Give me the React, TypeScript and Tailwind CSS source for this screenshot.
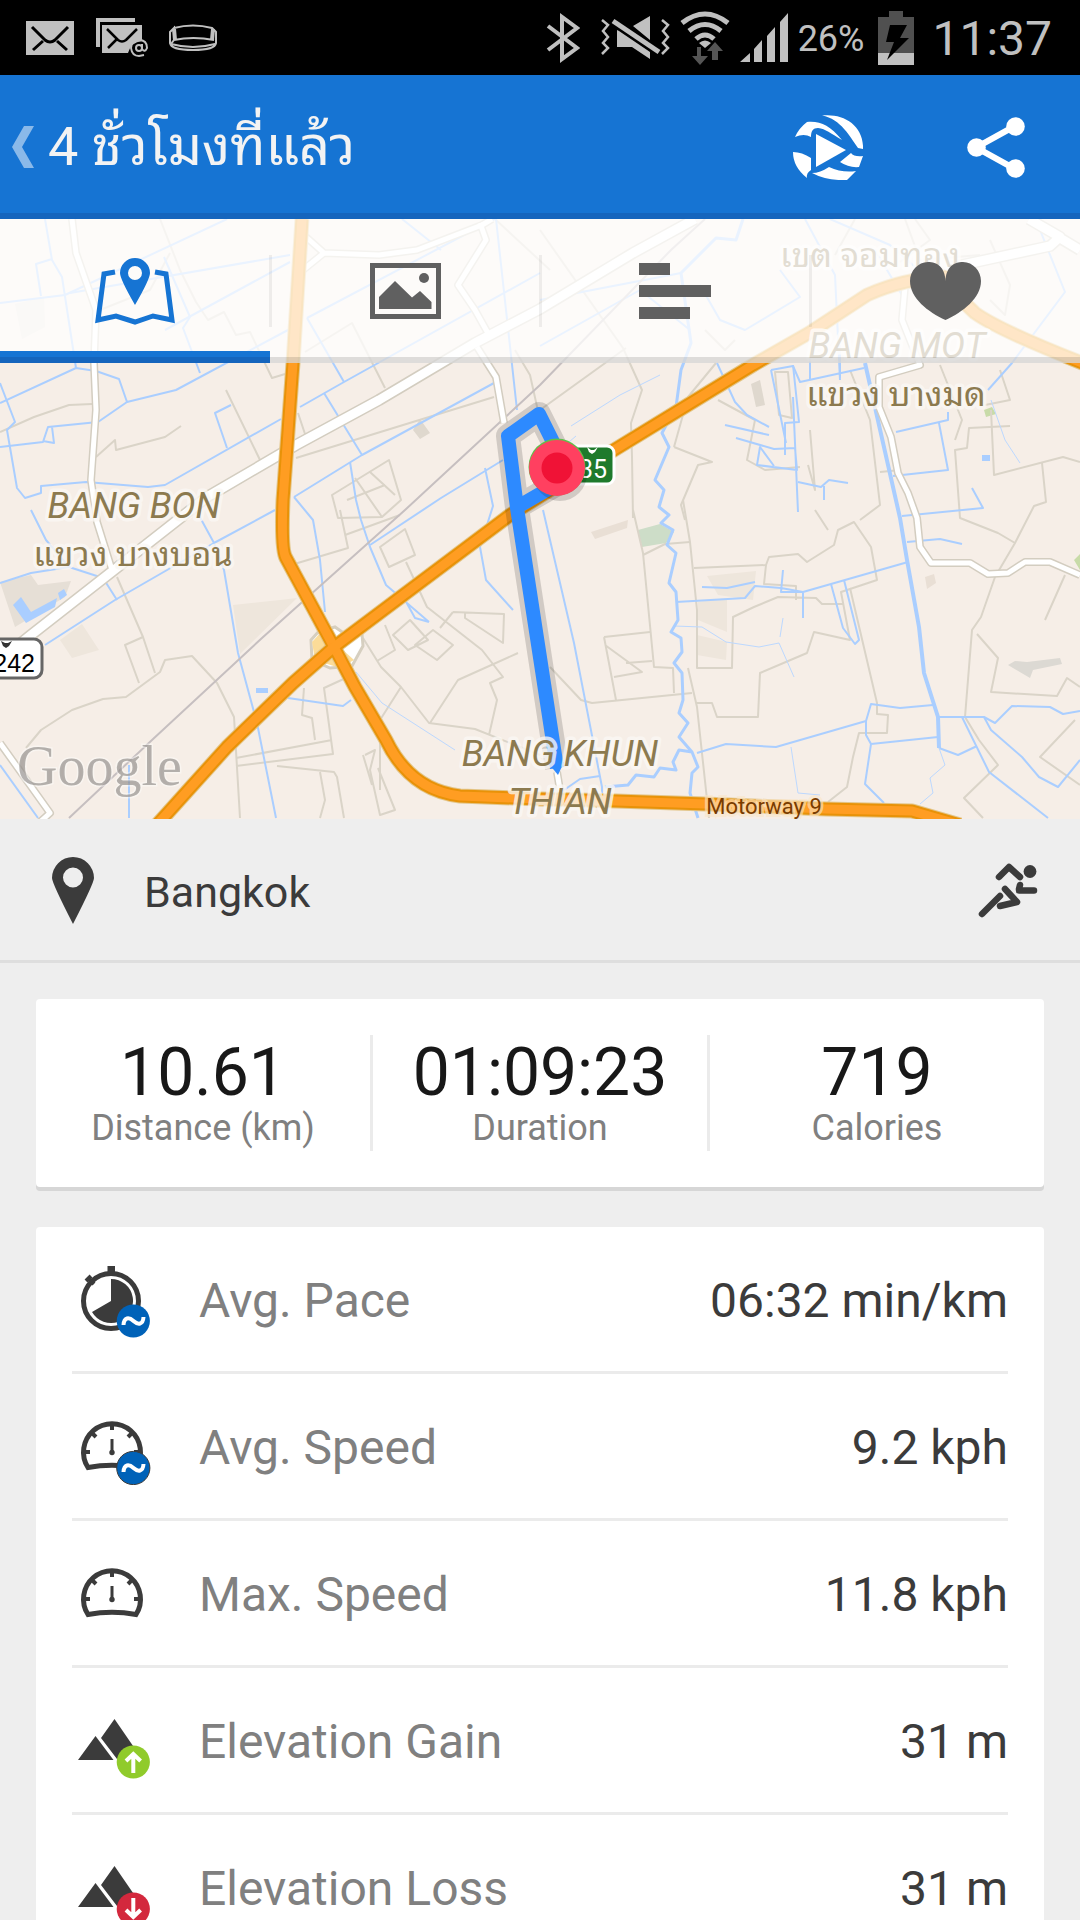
import type { ReactNode } from 'react';

const DARK = '#3b3b3b';

const tabs = [
    { key: 'map', label: 'Map', icon: <MapTabIcon /> },
    { key: 'photos', label: 'Photos', icon: <PhotoTabIcon /> },
    { key: 'splits', label: 'Splits', icon: <SplitsTabIcon /> },
    { key: 'heart', label: 'Heart rate', icon: <HeartTabIcon /> },
];

const summary = [
    { label: 'Distance (km)', value: '10.61' },
    { label: 'Duration', value: '01:09:23' },
    { label: 'Calories', value: '719' },
];

const details = [
    { label: 'Avg. Pace', value: '06:32 min/km', icon: <PaceIcon /> },
    { label: 'Avg. Speed', value: '9.2 kph', icon: <GaugeIcon average /> },
    { label: 'Max. Speed', value: '11.8 kph', icon: <GaugeIcon /> },
    { label: 'Elevation Gain', value: '31 m', icon: <ElevationIcon direction="up" /> },
    { label: 'Elevation Loss', value: '31 m', icon: <ElevationIcon direction="down" /> },
];

/* Map geometry */
const canals = [
    'M0 403 76 368 96 371 119 379 127 402 176 390 288 330',
    'M127 402 98 422 48 427 43 442 0 447M52 427 54 443 43 441',
    'M0 383 15 422 7 430 17 488 25 498 41 493V486L86 482 148 487 165 485 281 419',
    'M45 219 52 260 62 277 76 368M227 219 65 295 0 303M52 259 36 264 41 296',
    'M164 257 190 317 183 328 200 373M300 407 344 382 540 273M307 318 344 382',
    'M70 293 290 255M165 330 290 262M307 318 540 195M324 393 362 455',
    'M294 497 362 455 494 383M294 497 313 520 320 560 325 612',
    'M350 462 356 500 361 520 370 547 386 585 429 622M404 598 415 618 429 622',
    'M370 545 441 498 503 460M485 468 493 506 480 547 486 580 513 610',
    'M496 219 517 410M231 405 215 413 227 448M441 250 402 219',
    'M196 510 214 543 275 510M214 543 115 600 45 645M214 543 224 570 238 653 257 723 276 818',
    'M31 510 46 540 69 567 103 578 117 600M0 583 31 573 69 567',
    'M288 698 343 706 351 700M0 765 38 818M129 765V818',
    'M717 363 735 402 747 415 769 427M771 370 786 443M793 365 799 422 785 423V455',
    'M771 370 793 366 800 382 864 368M736 438 774 449 795 448 797 470 757 465 760 447 774 466M725 425 769 435M793 397 798 512M840 345V378M810 355V380',
    'M798 482 821 487 829 480 848 483M824 486V500M896 432 948 420V412M893 476 948 470 939 423',
    'M902 516 983 508 972 488M988 390 1012 363 1065 292 1040 230M907 542 940 539 962 544',
    'M676 602 745 598 755 586 781 588 803 592 908 562M702 587 727 588 755 582M783 570 781 592 803 592V618',
    'M831 584 843 628 855 644 859 640 844 580',
    'M697 753 726 744 776 747 866 721 871 704 900 708 933 705',
    'M866 721V735L871 744 938 737M871 744 865 784 884 803',
    'M938 717H984L995 723 1012 706 1050 707 1063 714 1080 711',
    'M984 717 991 730 1022 757 1039 777 1058 787 1080 760',
    'M962 717 989 772 1048 818M939 748 958 755 977 746',
    'M543 510 574 643 602 787V805M564 790 580 779 600 776',
    'M540 346 640 290 690 330M540 300 681 273M805 219 835 275 840 380M700 285 720 320 745 330 800 297 780 270',
    'M830 219 890 245 930 280 960 270M875 250 905 300',
];

const streams = [
    'M356 672 382 703 455 750M783 618 780 637M939 748 945 765 930 778 933 793 920 804',
    'M674 626 702 627 726 642 759 647 779 643 794 677M791 747 798 793 820 795',
    'M991 400 1005 440 1020 463M571 426 620 395 660 375M562 448 576 436',
];

const river =
    'M743 219 736 240 716 238 681 273 691 343 681 370 676 407 662 433 669 447 655 480 664 490 659 507 669 515 661 523 673 530 667 545 676 553 669 583 676 592 678 620 671 632 681 638 682 652 674 663 682 673 683 700 679 713 688 723 679 737 692 752 698 767 692 773 690 793 698 818M692 752 679 750 673 762 676 770 660 768 654 777 636 775 628 785 605 787';

const lanes = [
    'M643 555 665 544 690 542M633 510 643 553 654 667 673 668 674 693',
    'M694 568 766 565 769 557 798 554 807 562 834 545 838 530 854 522 871 547 877 580 841 592 850 640 814 632 807 653 760 673 758 717 717 717 712 703 696 703',
    'M766 565 764 584 796 586V600M683 500 690 542 697 610V668H732L733 617 754 607 778 597 816 598 822 604 843 604',
    'M688 668 697 707 709 818M850 588 877 703V714L888 715 887 733 859 733 853 757 847 787 828 802',
    'M550 667 581 700 592 703 692 693M604 637 650 632M604 637 616 700M605 645 642 672 614 677M626 663 652 661',
    'M1010 426 969 428 967 448 955 450 960 518 998 533 1015 543 995 577 981 617 972 630 965 717 979 740 998 765 964 798 983 818',
    'M977 634 998 658 991 692 1057 696 1067 678 1080 687M991 410 994 475 1063 457 1080 462M1042 463 1046 502 1034 506 1015 543',
    'M633 518 632 457 631 423 642 390 623 348 540 230M540 410 626 348M674 447 688 397 716 363M674 447 712 462 698 465 681 505 685 520',
    'M26 748 41 730 72 710 103 699 126 697 160 672 165 660 192 656 217 683 234 717 240 818',
    'M117 577 143 637 155 673M143 637 125 645 139 683M236 758 332 740M236 766 333 754 324 688 348 677',
    'M304 688 302 715 312 718 315 740M277 766 334 772 337 777 344 818M320 772 325 800 320 818',
    'M363 638 381 667 401 687 429 723 475 729 540 755M430 723 458 680 518 653M401 687 380 720 380 790',
    'M406 562 427 607 482 650 503 677 490 683 497 700 489 735M453 612 504 614 503 643 465 618V612M453 612 440 628',
    'M380 547 405 529 415 555 389 567ZM393 635 410 620 428 640 408 650ZM415 645 433 630 453 645 437 660Z',
    'M365 755 375 750 370 770 380 815 395 810 378 768M363 755 372 785M377 661 395 650 385 625',
    'M226 390 260 460M96 457 115 440 116 450 165 437 181 426M0 432 34 417 69 405 92 404M298 413 307 440',
    'M160 219 180 270 196 302 208 320 224 312 236 335 250 332 272 378 285 374M100 310 150 290 170 253',
    'M332 495 389 460 401 500 382 517 338 518ZM355 478 382 517M370 472 395 495M345 535 400 515M347 500 385 485',
    'M305 352 352 323 385 388M296 458 494 397M515 350 530 375 540 420M291 565 348 548 340 510M495 219 550 270',
    'M718 400 755 420 747 460 765 470 800 467M775 372 779 415 792 418 788 372ZM810 430 815 490 808 465',
    'M850 370 870 420 880 505 860 520M815 510 828 530M905 219 920 260 980 255M855 219 835 255M940 365 962 420 955 440M1000 370 1010 400 985 405M990 300 1005 315 1010 285 990 240',
    'M880 472 900 470M915 219 930 240 900 262M705 330 725 350 735 340M1065 575 1045 620M1075 720 1040 757 1080 785',
];

const whiteRoads = [
    'M72 219 76 253 96 310 94 363 96 410 91 480 97 522 112 570',
    'M306 237 324 253 303 270M324 253 379 255 417 250 482 225 492 219',
    'M480 223 486 240 458 285 475 310 489 335M477 347 496 377 504 423',
    'M905 287 902 320 920 365 879 377V407L891 437 898 473 908 493 917 518 920 547 931 563H970L988 574 1008 573 1025 562 1050 562 1080 575',
    'M0 743 50 813 40 822M557 772 561 796',
];

const wideWhiteRoads = [
    'M695 219 633 253 540 309 475 343 379 400 296 445 207 497 114 570 31 635 0 660',
    'M1029 219 1060 237 1050 246 953 267M1055 235 1080 250',
];

const highways = [
    'M302 219 293 363 283 500Q281 550 286 558L334 647 355 687 386 740Q410 790 460 796L540 799 616 801 705 804 826 809 912 811 960 825',
    'M155 827 227 747 293 683 334 647 510 515 614 450 753 365 809 333 867 295Q905 278 946 277 960 300 975 313 1000 331 1090 366',
];

function StatusBar() {
    return (
        <div className="flex h-[75px] shrink-0 items-center justify-between bg-black px-6 text-[#c0c0c0]">
            <div className="flex items-center gap-5">
                <svg viewBox="0 0 50 36" className="h-9 w-[50px]" fill="none">
                    <path fill="#c0c0c0" d="M2 1h48v34H2z" />
                    <path d="M8 7 21 20q5 4 10 0L44 7M9 30l10-9M43 30 33 21" stroke="#000" strokeWidth="3" />
                </svg>
                <svg viewBox="0 0 54 40" className="h-10 w-[54px]" fill="none">
                    <path d="M4 29V2H41" stroke="#c0c0c0" strokeWidth="4" />
                    <path fill="#c0c0c0" d="M8 7h40v16q-11 1-14 12H8z" />
                    <path d="M13 11 24 22q4 3 8 0L43 11M14 30l9-9" stroke="#000" strokeWidth="2.500" />
                    <circle cx="45" cy="30" r="3" stroke="#c0c0c0" strokeWidth="2" />
                    <path d="M48 26v5q3 4 5-1 0-8-8-8-8 1-8 8 1 8 8 8l5-1" stroke="#c0c0c0" strokeWidth="2" />
                </svg>
                <svg viewBox="0 0 50 28" className="h-7 w-[50px]" fill="none" stroke="#c0c0c0" strokeWidth="2">
                    <path d="M6 4Q25-1 44 4L48 8V19Q47 26 25 26T2 19V8L6 4V16Q25 12 46 16M44 4V15M6 16 3 20Q25 26 47 20" />
                    <path d="M6 5 7 16M45 5 44 16" strokeWidth="4" />
                </svg>
            </div>
            <div className="flex items-center gap-2.5">
                <svg viewBox="0 0 34 52" className="mr-2.5 h-[52px] w-[34px]" fill="none" stroke="#c0c0c0" strokeWidth="4">
                    <path d="m2 14 29 22-15 11V5l15 11L2 38" />
                </svg>
                <svg viewBox="0 0 70 48" className="h-12 w-[70px]" fill="#c0c0c0">
                    <path d="M17 16v17h15l18 12V38L19 17zM33 12 50 2v24z" />
                    <path d="M13 7 59 38" stroke="#c0c0c0" strokeWidth="5" />
                    <path
                        d="m2 6 6 5-5 6 5 6-5 6 5 5-6 6M62 6l6 5-5 6 5 6-5 6 5 5-6 6"
                        fill="none"
                        stroke="#c0c0c0"
                        strokeWidth="2.500"
                    />
                </svg>
                <svg viewBox="0 0 50 54" className="h-[54px] w-[50px]" fill="none" stroke="#c0c0c0" strokeWidth="5">
                    <path d="M2 12Q25-6 48 12M9 20Q25 7 41 20M16 28Q25 20 34 28" />
                    <path d="m19 32 6 5 6-5q-6-5-12 0z" fill="#c0c0c0" stroke="none" />
                    <path d="M21 36v9h7l-8 9-8-9h5v-9zM32 49V40h-5l8-9 8 9h-5v9z" fill="#555" stroke="none" />
                </svg>
                <svg viewBox="0 0 48 50" className="h-[50px] w-12" fill="#c0c0c0">
                    <path d="M0 49 10 40v9zM14 36l8-9v22h-8zM27 23l8-9v35h-8zM40 9l8-9v49h-8z" />
                </svg>
                <span className="pt-0.5 text-4xl">26%</span>
                <svg viewBox="0 0 36 54" className="mx-1 h-[54px] w-9">
                    <path fill="#505050" d="M11 0h14v6h11v36H0V6h11z" />
                    <path fill="#c0c0c0" d="M0 42h36v12H0z" />
                    <path fill="#000" d="M12 14h17l-7 13h9L9 49l7-18H8z" />
                </svg>
                <span className="px-1 pt-0.5 text-5xl">11:37</span>
            </div>
        </div>
    );
}

function Header() {
    return (
        <header className="flex h-36 shrink-0 items-center border-b-6 border-[#1565bd] bg-[#1674d3] pt-1.5 pr-[55px] pl-3">
            <button className="flex items-center gap-3.5 text-[#f3f3f3]">
                <svg viewBox="0 0 22 42" className="h-[42px] w-[22px]">
                    <path fill="#8ab9e9" d="M12 0h10L10 21l12 21H12L0 21z" />
                </svg>
                <h1 className="text-[54px] leading-none">4 ชั่วโมงที่แล้ว</h1>
            </button>
            <div className="ml-auto flex items-center gap-26">
                <button aria-label="Play workout">
                    <svg viewBox="0 0 70 65" className="h-[65px] w-[70px]" fill="#fff">
                        <path d="M29 .5C50-2 71 10 70 34L65 33C57 22 48 4 29 .5z" />
                        <path d="M2 22Q6 13 14 7C28 6 36 10 49 25 37 18 33 14 25 13 20 13 18 16 18 22Q11 18 2 22z" />
                        <path d="m23 19 30 16-30 17z" />
                        <path d="M0 37Q9 37 18 43V55Q13 58 14 63 0 52 0 37z" />
                        <path d="M19 58Q27 58 36 52 49 58 63 56L54 65Q34 66 19 58z" />
                        <path d="M47 47 58 38Q61 42 70 41L66 52Q56 53 47 47z" />
                    </svg>
                </button>
                <button aria-label="Share">
                    <svg viewBox="0 0 58 61" className="h-[61px] w-[58px]" fill="#fff">
                        <path d="M48 9 9 30.5 48 52" fill="none" stroke="#fff" strokeWidth="6" />
                        <circle cx="9.500" cy="30.500" r="9.300" />
                        <circle cx="48.500" cy="9.500" r="9.300" />
                        <circle cx="48.500" cy="51.500" r="9.300" />
                    </svg>
                </button>
            </div>
        </header>
    );
}

function MapTabIcon() {
    return (
        <svg viewBox="0 0 80 68" className="h-[68px] w-20" fill="none">
            <path d="M20 15 9 17 3 63 21 59 40 65 58 59 77 63 71 17 60 15" stroke="#1674d3" strokeWidth="5" />
            <path
                fill="#1674d3"
                fillRule="evenodd"
                d="M40 1a15 15 0 0 1 15 15q0 6-15 32-15-26-15-32A15 15 0 0 1 40 1zm0 8a7 7 0 1 0 0 14 7 7 0 0 0 0-14z"
            />
        </svg>
    );
}

function PhotoTabIcon() {
    return (
        <svg viewBox="0 0 71 56" className="h-14 w-[71px]" fill="#606060">
            <path d="M2.5 2.5h66v51h-66z" fill="none" stroke="#606060" strokeWidth="5" />
            <path d="M9 46V34L25 18 42 34.500 50 28 61.500 39v7z" />
            <circle cx="54" cy="15" r="5" />
        </svg>
    );
}

function SplitsTabIcon() {
    return (
        <svg viewBox="0 0 72 56" className="h-14 w-[72px]" fill="#606060">
            <path d="M0 0h31v12H0zM0 22h72v12H0zM0 44h51v12H0z" />
        </svg>
    );
}

function HeartTabIcon() {
    return (
        <svg viewBox="0 0 71 58" className="h-[58px] w-[71px]" fill="#606060">
            <path d="M35.500 19C35 5 27 0 18 0 8 0 0 9 0 19c0 17 18 31 35.500 39C53 50 71 36 71 19 71 9 63 0 53 0c-9 0-17 5-17.500 19z" />
        </svg>
    );
}

function Tabs() {
    return (
        <nav className="absolute inset-x-0 top-0 grid h-36 grid-cols-4 bg-white/75">
            {tabs.map((tab, i) => (
                <button
                    key={tab.key}
                    aria-label={tab.label}
                    className={
                        i === 0
                            ? 'relative flex items-center justify-center border-b-6 border-[#1565bd] pt-1.5'
                            : 'relative flex items-center justify-center border-b-6 border-black/12 pt-1.5'
                    }
                >
                    {tab.icon}
                    {i === 0 && <span className="absolute inset-x-0 bottom-0 h-1.5 bg-[#1674d3]" />}
                    {i < 3 && <span className="absolute top-9 -right-0.5 h-[72px] w-[3px] bg-black/6" />}
                </button>
            ))}
        </nav>
    );
}

function Lines({ paths, color, width }: { paths: string[]; color: string; width: number }) {
    return (
        <g fill="none" stroke={color} strokeWidth={width} strokeLinejoin="round">
            {paths.map((d) => (
                <path key={d} d={d} />
            ))}
        </g>
    );
}

function MapLabel({ x, y, italic, children }: { x: number; y: number; italic?: boolean; children: string }) {
    return (
        <text
            x={x}
            y={y}
            textAnchor="middle"
            fontSize={italic ? 36 : 34}
            fontStyle={italic ? 'italic' : 'normal'}
            fill="#8c7a4f"
            stroke="#fbf8f4"
            strokeOpacity="0.8"
            strokeWidth="7"
            strokeLinejoin="round"
            paintOrder="stroke"
        >
            {children}
        </text>
    );
}

function RouteMap() {
    return (
        <svg viewBox="0 219 1080 600" className="block w-full bg-[#f6eee7]">
            {/* areas */}
            <path fill="#e6dfd6" d="M0 582 31 575 38 585 71 581 65 597 15 627z" />
            <path fill="#aaceff" d="M13 605 21 597 31 612 57 598 55 607 26 623zM58 593l6-4 3 6-7 5z" />
            <path fill="#eee6dc" d="M233 605 280 600 297 598 240 654zM60 640 82 624 99 650 72 658zM707 576 756 571 753 600 718 595zM698 602 727 598V632L698 620zM697 635 727 642 726 660 697 655z" />
            <path fill="#ebe5dd" d="M15 304 44 297 45 327 22 339z" />
            <path fill="#dfd8ce" d="M751 384 760 380 765 405 756 407zM413 430 420 419 430 433 420 439z" />
            <path fill="#cdddc8" d="M638 530 660 524 674 532 666 543 642 547z" />
            <path fill="#c8dba8" d="M984 410 992 407 996 414 986 417zM1074 560 1080 554V570z" />
            <path fill="#dcd9d3" d="M1008 665 1015 661 1027 662 1060 658 1062 664 1033 670 1030 678z" />
            <path fill="#e9dfd5" d="M591 532 628 520 627 528 595 539zM925 577 934 574 936 583 927 589z" />
            <path fill="#aaceff" d="M982 455h8v6h-8zM256 688h12v5h-12z" />

            <Lines paths={lanes} color="#dad4c8" width={2} />
            <Lines paths={canals} color="#aaceff" width={2} />
            <Lines paths={streams} color="#bcd8ff" width={1} />
            <Lines paths={[river]} color="#aaceff" width={3} />
            <Lines paths={['M865 363 900 518 907 560 919 627 924 673 938 717 939 748']} color="#aaceff" width={4} />
            <Lines paths={['M69 818 152 740 262 638 405 510 540 385 671 250 705 219']} color="#c6bfc0" width={2} />

            {/* roads */}
            <Lines paths={whiteRoads} color="#d3cdc0" width={8} />
            <Lines paths={wideWhiteRoads} color="#d3cdc0" width={12} />
            <Lines paths={whiteRoads} color="#fff" width={5} />
            <Lines paths={wideWhiteRoads} color="#fff" width={9} />
            <path
                d="M311 640 320 630 328 629 335 627 345 634 362 634 363 646 352 666 330 668 312 660z"
                fill="#fff"
                stroke="#d6cfc0"
                strokeWidth="3"
            />
            <path fill="#fcdc98" d="M312 642 322 631 354 660 340 668 315 660z" />
            <Lines paths={highways} color="#e3c68a" width={15} />
            <Lines paths={highways} color="#e89208" width={13} />
            <Lines paths={highways} color="#ff9d22" width={9} />

            {/* labels under the route */}
            <MapLabel x={870} y={267}>เขต จอมทอง</MapLabel>
            <MapLabel x={897} y={358} italic>BANG MOT</MapLabel>
            <MapLabel x={896} y={406}>แขวง บางมด</MapLabel>
            <MapLabel x={134} y={518} italic>BANG BON</MapLabel>
            <MapLabel x={133} y={566}>แขวง บางบอน</MapLabel>

            {/* route */}
            <g fill="none" strokeLinejoin="round">
                <path d="M557 450 539 414 508 436 517 508 557 768M519 506 557 484" stroke="#000" strokeOpacity="0.15" strokeWidth="24" />
                <path d="M557 450 539 414 508 436 517 508 557 768M519 506 557 484" stroke="#2d8aff" strokeWidth="14" />
                <path d="M549 764 558 775 564 762z" fill="#2d8aff" />
            </g>
            <MapLabel x={560} y={766} italic>BANG KHUN</MapLabel>
            <MapLabel x={560} y={814} italic>THIAN</MapLabel>
            <text x="764" y="814" textAnchor="middle" fontSize="22" fill="#7a3c00" stroke="#fbe6c8" strokeOpacity="0.6" strokeWidth="6" paintOrder="stroke">
                Motorway 9
            </text>

            {/* road shields */}
            <rect x="560" y="446" width="54" height="38" rx="7" fill="#1f7a2c" stroke="#fff" strokeWidth="3" />
            <path fill="#fff" d="m587 447 4 3h3l4-3-3 5-3 2-3-2z" />
            <text x="593" y="478" textAnchor="middle" fontSize="25" fill="#fff">35</text>
            <rect x="-16" y="639" width="58" height="39" rx="8" fill="#fff" stroke="#666" strokeWidth="3" />
            <path fill="#333" d="m1 641 4 2h3l4-2-3 5-3 2-3-2z" />
            <text x="35" y="672" textAnchor="end" fontSize="25" className="font-['Liberation_Sans',Arial,sans-serif]">242</text>

            {/* finish marker */}
            <circle cx="560" cy="474" r="27" fill="#000" fillOpacity="0.15" />
            <circle cx="557" cy="467" r="28.500" fill="#5fc14a" />
            <circle cx="557" cy="468" r="28" fill="#ff4060" />
            <circle cx="557" cy="468" r="15.500" fill="#f01236" />

            <text
                x="17"
                y="785"
                fontSize="56"
                fill="#8d8985"
                fillOpacity="0.65"
                stroke="#fff"
                strokeOpacity="0.4"
                strokeWidth="3"
                paintOrder="stroke"
                className="font-['Liberation_Serif',serif]"
            >
                Google
            </text>
        </svg>
    );
}

function LocationRow() {
    return (
        <div className="flex h-36 items-center border-b-3 border-[#dedede] pt-0.5 pr-[42px] pl-[52px]">
            <svg viewBox="0 0 42 67" className="h-[67px] w-[42px]">
                <path
                    fill={DARK}
                    fillRule="evenodd"
                    d="M21 0a21 21 0 0 1 21 21q0 5-21 46Q0 26 0 21A21 21 0 0 1 21 0zm0 10.500a10 10 0 1 0 0 20 10 10 0 0 0 0-20z"
                />
            </svg>
            <span className="pt-1 pl-[50px] text-[43px] text-[#3b3b3b]">Bangkok</span>
            <svg
                viewBox="0 0 60 55"
                className="ml-auto h-[55px] w-[60px]"
                fill="none"
                stroke={DARK}
                strokeWidth="6.500"
                strokeLinecap="round"
                strokeLinejoin="round"
            >
                <path d="M21 14 31 4 42 14M4 51 22 33" />
                <path d="M27 26 39 39 22 43" />
                <path d="M41 27.500H56M41 26 42 22" />
                <circle cx="52" cy="8.500" r="6.400" fill={DARK} stroke="none" />
            </svg>
        </div>
    );
}

function SummaryCard() {
    return (
        <dl className="flex divide-x-3 divide-[#ebebeb] rounded-sm bg-white py-9 shadow-[0_4px_0_#d6d6d6]">
            {summary.map((item) => (
                <div key={item.label} className="box-content flex flex-1 flex-col-reverse pt-1 pb-0.5 text-center">
                    <dt className="text-4xl leading-[42px] text-[#808080]">{item.label}</dt>
                    <dd className="text-[66px] leading-[68px] text-[#181818]">{item.value}</dd>
                </div>
            ))}
        </dl>
    );
}

function Badge({ color, children }: { color: string; children: ReactNode }) {
    return (
        <g>
            <circle cx="58.300" cy="61" r="16.600" fill={color} />
            <g fill="none" stroke="#fff" strokeWidth="4">
                {children}
            </g>
        </g>
    );
}

function AverageBadge() {
    return (
        <Badge color="#0062b8">
            <path d="M48.500 65C49 57 54 57 58.500 61S68 65 68.500 57" />
        </Badge>
    );
}

function PaceIcon() {
    return (
        <svg viewBox="0 0 78 78" className="size-[78px]" fill={DARK}>
            <circle cx="36" cy="41" r="27.500" fill="none" stroke={DARK} strokeWidth="5" />
            <path d="M32.500 6h7.500v8h-7.500zM36 19a22 22 0 1 1-19 33L36 41z" />
            <path d="m11 21 5-5M13 18l6 6" stroke={DARK} strokeWidth="4" />
            <AverageBadge />
        </svg>
    );
}

function GaugeIcon({ average = false }: { average?: boolean }) {
    return (
        <svg viewBox="0 0 78 78" className="size-[78px]" fill="none" stroke={DARK}>
            <path d="M13 60.500A28.500 28.500 0 1 1 61 60.500Q37 56 13 60.500z" strokeWidth="5" />
            <path d="M37 17v6M9 45h6M59 45h6M17 26l4 4M57 26l-4 4" strokeWidth="4" />
            <path d="M37 32v14" strokeWidth="3" />
            <circle cx="37" cy="45.500" r="2.700" fill={DARK} stroke="none" />
            {average && <AverageBadge />}
        </svg>
    );
}

function ElevationIcon({ direction }: { direction: 'up' | 'down' }) {
    return (
        <svg viewBox="0 0 78 78" className="size-[78px]" fill={DARK}>
            <path d="M3 59 20.500 35 38.500 59zM39.500 18 67 58H42L26 37z" />
            {direction === 'up' ? (
                <Badge color="#90cb2b">
                    <path d="M58.300 72V53M51 60l7.300-7 7.300 7" />
                </Badge>
            ) : (
                <Badge color="#d3283d">
                    <path d="M58.300 50v19M51 62l7.300 7 7.300-7" />
                </Badge>
            )}
        </svg>
    );
}

function DetailsCard() {
    return (
        <dl className="divide-y-3 divide-[#ebebeb] rounded-sm bg-white px-9 shadow-[0_4px_0_#d6d6d6]">
            {details.map((item) => (
                <div key={item.label} className="flex h-[147px] items-center text-5xl last:h-36">
                    <dt className="flex items-center gap-[46px] pl-[3px] text-[#808080]">
                        {item.icon}
                        <span className="pt-1">{item.label}</span>
                    </dt>
                    <dd className="ml-auto pt-1 text-[#3b3b3b]">{item.value}</dd>
                </div>
            ))}
        </dl>
    );
}

export default function App() {
    return (
        <div className="flex h-screen flex-col bg-[#eeeeee] font-[Roboto,'Noto_Sans_Thai_Looped','Noto_Looped_Thai',Loma,Waree,Garuda,sans-serif]">
            <StatusBar />
            <Header />
            <main className="min-h-0 flex-1 overflow-y-auto [scrollbar-width:none]">
                <section className="relative">
                    <RouteMap />
                    <Tabs />
                </section>
                <LocationRow />
                <div className="flex flex-col gap-10 p-9">
                    <SummaryCard />
                    <DetailsCard />
                </div>
            </main>
        </div>
    );
}
